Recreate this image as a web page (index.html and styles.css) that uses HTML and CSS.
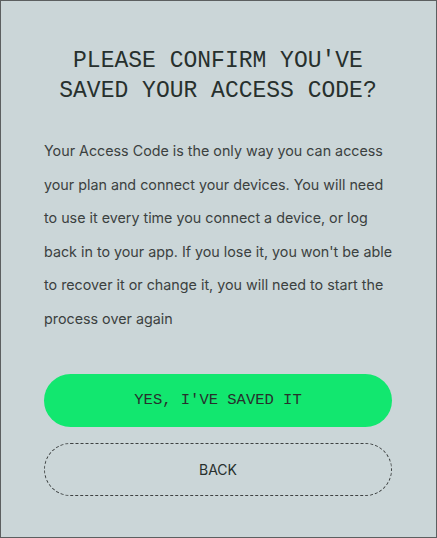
FILE: index.html
```html
<!DOCTYPE html>
<html>
<head>
  <title>Confirm access code</title>
  <meta name="viewport" content="width=device-width, initial-scale=1">
  <link rel="stylesheet" href="styles.css">
</head>
<body>
  <div class="modal">
    <h1>Please confirm you've saved your access code?</h1>
    <p class="message">
      Your Access Code is the only way you can access your plan and connect your devices. You will need to use it every time you connect a device, or log back in to your app. If you lose it, you won't be able to recover it or change it, you will need to start the process over again
    </p>
    <div class="actions">
      <button class="btn btn-primary">Yes, I've saved it</button>
      <button class="btn btn-back">Back</button>
    </div>
  </div>
</body>
</html>
```

FILE: styles.css
```css
/* Common styles */
html, body {
  height: 100%;
}

body {
  margin: 0;
  background-color: #cbd6d8;
  font-family: Inter, "Noto Sans", sans-serif;
}

/* Modal box */
.modal {
  box-sizing: border-box;
  height: 100%;
  border: 1px solid #5c5f60;
  padding: 45px 44px 0 43px;
}

h1 {
  margin: 0;
  font-family: "Liberation Mono", monospace;
  font-size: 23px;
  font-weight: normal;
  line-height: 30px;
  text-align: center;
  text-transform: uppercase;
  color: #27302d;
}

.message {
  margin: 28px 0 0;
  font-size: 14.3px;
  line-height: 33.6px;
  color: #3b4140;
}

/* Buttons */
.actions {
  display: flex;
  flex-direction: column;
  gap: 16px;
  margin-top: 38px;
}

.btn {
  height: 53px;
  border-radius: 27px;
  cursor: pointer;
  text-transform: uppercase;
  color: #27302d;
}

.btn-primary {
  background-color: #12e76f;
  border: none;
  font-family: "Liberation Mono", monospace;
  font-size: 15.5px;
}

.btn-back {
  background: transparent;
  border: 1px dashed #3e4242;
  font-family: Inter, "Noto Sans", sans-serif;
  font-size: 14px;
}
```
